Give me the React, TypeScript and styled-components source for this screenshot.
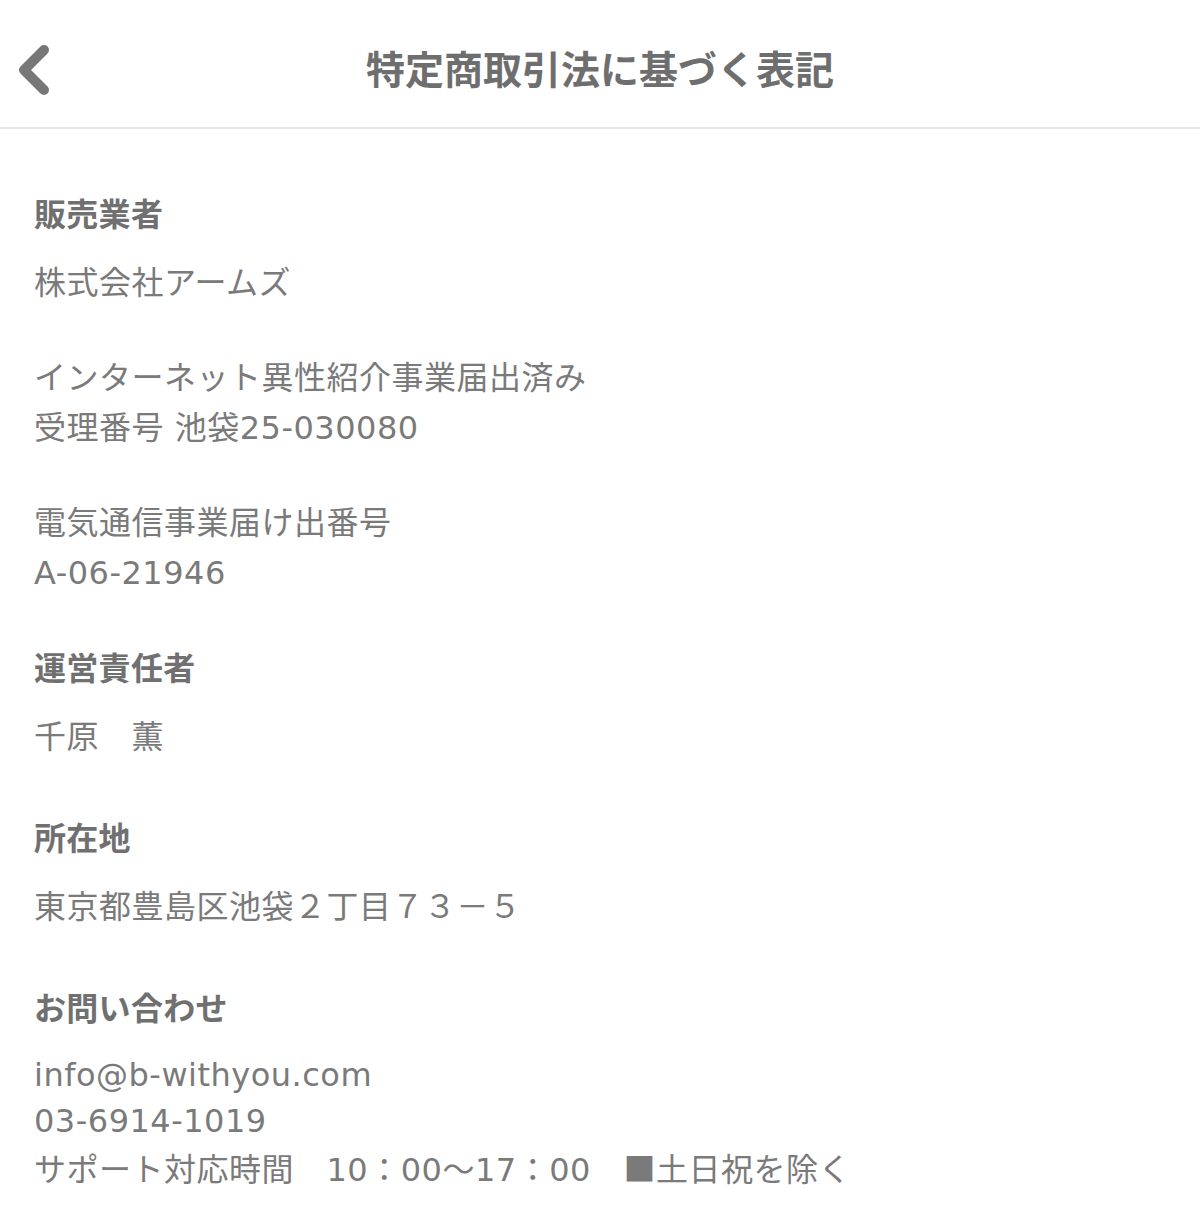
import styled, { createGlobalStyle } from "styled-components";

const GlobalStyle = createGlobalStyle`
  html, body {
    margin: 0;
    padding: 0;
    background: #ffffff;
  }
  body {
    font-family: "DejaVu Sans", "Noto Sans CJK JP", sans-serif;
    color: #777777;
  }
`;

type Group = {
  heading?: string;
  lines: string[];
  top: number;
  lh?: number;
};

const groups: Group[] = [
  { heading: "販売業者", lines: ["株式会社アームズ"], top: 0 },
  { lines: ["インターネット異性紹介事業届出済み", "受理番号 池袋25-030080"], top: 45 },
  { lines: ["電気通信事業届け出番号", "A-06-21946"], top: 45 },
  { heading: "運営責任者", lines: ["千原　薫"], top: 43 },
  { heading: "所在地", lines: ["東京都豊島区池袋２丁目７３－５"], top: 49 },
  {
    heading: "お問い合わせ",
    lines: ["info@b-withyou.com", "03-6914-1019", "サポート対応時間　10：00〜17：00　■土日祝を除く"],
    top: 49,
    lh: 46,
  },
];

// the black square must come from the CJK font, not DejaVu
const renderLine = (text: string) =>
  text.split("■").flatMap((part, i) =>
    i === 0 ? [part] : [<Cjk key={i}>■</Cjk>, part]
  );

const BackIcon = () => (
  <svg width="40" height="56" viewBox="0 0 40 56">
    <path
      d="M30 8 L10 28 L30 48"
      fill="none"
      stroke="#777"
      strokeWidth="10"
      strokeLinecap="round"
      strokeLinejoin="round"
    />
  </svg>
);

const App = () => {
  return (
    <>
      <GlobalStyle />
      <Page>
        <Header>
          <Back>
            <BackIcon />
          </Back>
          <Title>特定商取引法に基づく表記</Title>
        </Header>
        <Content>
          {groups.map((g, i) => (
            <Section key={i} top={g.top}>
              {g.heading && <Heading>{g.heading}</Heading>}
              {g.lines.map((l, j) => (
                <Line key={j} lh={g.lh ?? 50}>
                  {renderLine(l)}
                </Line>
              ))}
            </Section>
          ))}
        </Content>
      </Page>
    </>
  );
};

export default App;

const Page = styled.div`
  width: 1200px;
  min-height: 1212px;
  background: #fff;
`;

const Header = styled.div`
  position: relative;
  height: 127px;
  border-bottom: 2px solid #e5e5e5;
  display: flex;
  align-items: center;
  justify-content: center;
`;

const Back = styled.div`
  position: absolute;
  left: 14px;
  top: 42px;
  width: 40px;
  height: 56px;
  display: flex;
`;

const Title = styled.h1`
  margin: 0;
  margin-top: 6px;
  font-family: "Noto Sans CJK JP", sans-serif;
  font-size: 39px;
  font-weight: 700;
  color: #6e6e6e;
`;

const Content = styled.div`
  padding: 58px 34px 0;
`;

const Section = styled.div<{ top: number }>`
  margin-top: ${(p) => p.top}px;
`;

const Heading = styled.div`
  font-family: "Noto Sans CJK JP", sans-serif;
  font-size: 32px;
  font-weight: 700;
  line-height: 50px;
  color: #707070;
  margin-bottom: 21px;
  letter-spacing: 0.3px;
`;

const Line = styled.div<{ lh: number }>`
  font-size: 32px;
  font-weight: 400;
  line-height: ${(p) => p.lh}px;
  color: #7a7a7a;
  white-space: pre;
  letter-spacing: 0.5px;
`;

const Cjk = styled.span`
  font-family: "Noto Sans CJK JP", sans-serif;
`;
